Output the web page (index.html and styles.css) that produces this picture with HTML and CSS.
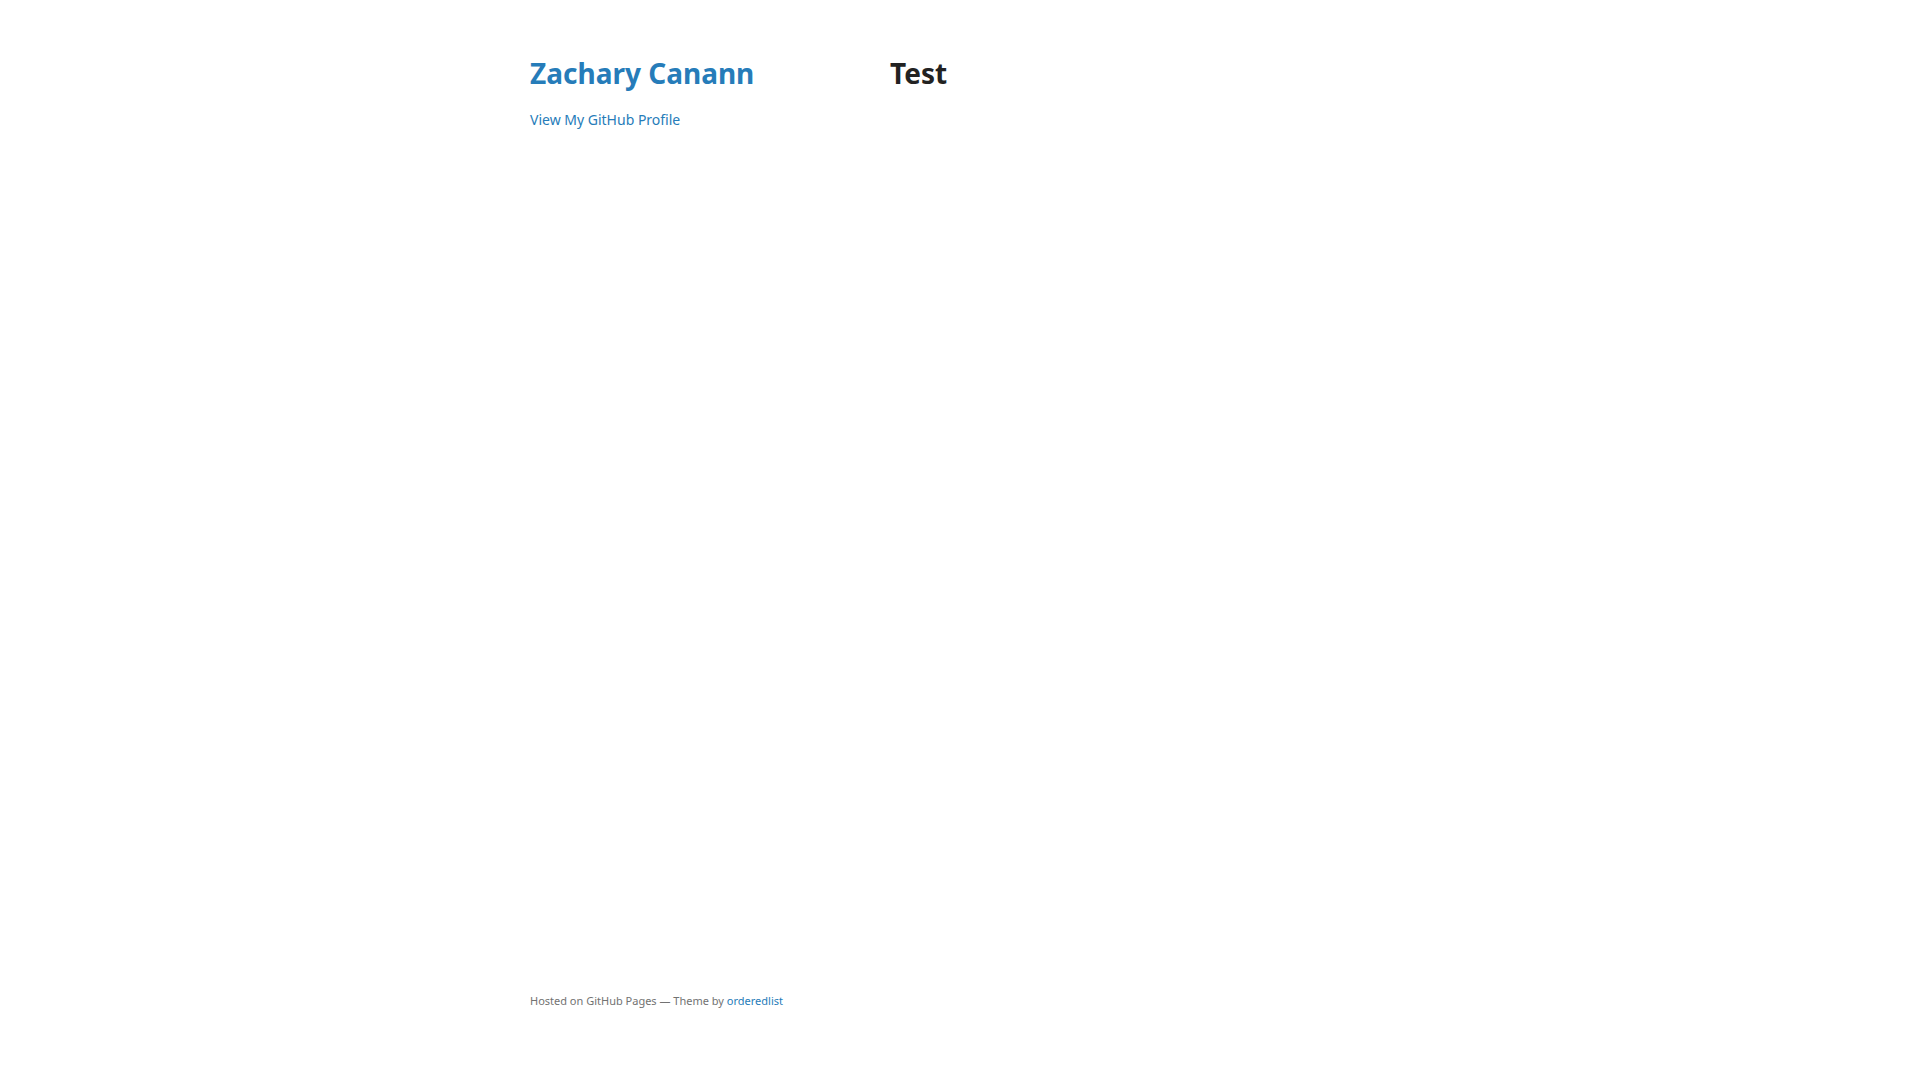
FILE: index.html
```
<!DOCTYPE html>
<html lang="en-US">
<head>
    <meta charset="UTF-8">
    <meta name="viewport" content="width=device-width, initial-scale=1">
    <title>Test | Zachary Canann</title>
    <link rel="stylesheet" href="styles.css">
</head>
<body>
    <div class="wrapper">
        <div class="sidebar">
            <header>
                <h1><a href="#">Zachary Canann</a></h1>
                <p class="view"><a href="#">View My GitHub Profile</a></p>
            </header>
            <footer>
                <p><small>Hosted on GitHub Pages &mdash; Theme by <a href="#">orderedlist</a></small></p>
            </footer>
        </div>
        <section>
            <h1 id="test">Test</h1>
        </section>
    </div>
</body>
</html>
```

FILE: styles.css
```
* {
    box-sizing: border-box;
}
body {
    background-color: #fff;
    color: #727272;
    font: 14px/21px "Noto Sans", "Helvetica Neue", Helvetica, Arial, sans-serif;
    margin: 0;
    padding: 58px 50px 49px;
}
h1 {
    color: #222;
    font-size: 28px;
    line-height: 31px;
    margin: 0 0 20px;
}
p {
    margin: 0 0 20px;
}
a {
    color: #267cb9;
    text-decoration: none;
}
a:hover, a:focus {
    color: #069;
}
small {
    font-size: 11px;
}
.wrapper {
    display: flex;
    justify-content: space-between;
    max-width: 860px;
    min-height: calc(100vh - 107px);
    margin: 0 auto;
}
.sidebar {
    display: flex;
    flex-direction: column;
    justify-content: space-between;
    width: 270px;
}
section {
    width: 500px;
}
@media screen and (max-width: 960px) {
    .wrapper {
        flex-direction: column;
        justify-content: flex-start;
    }
    .sidebar, section {
        width: auto;
    }
}
```
